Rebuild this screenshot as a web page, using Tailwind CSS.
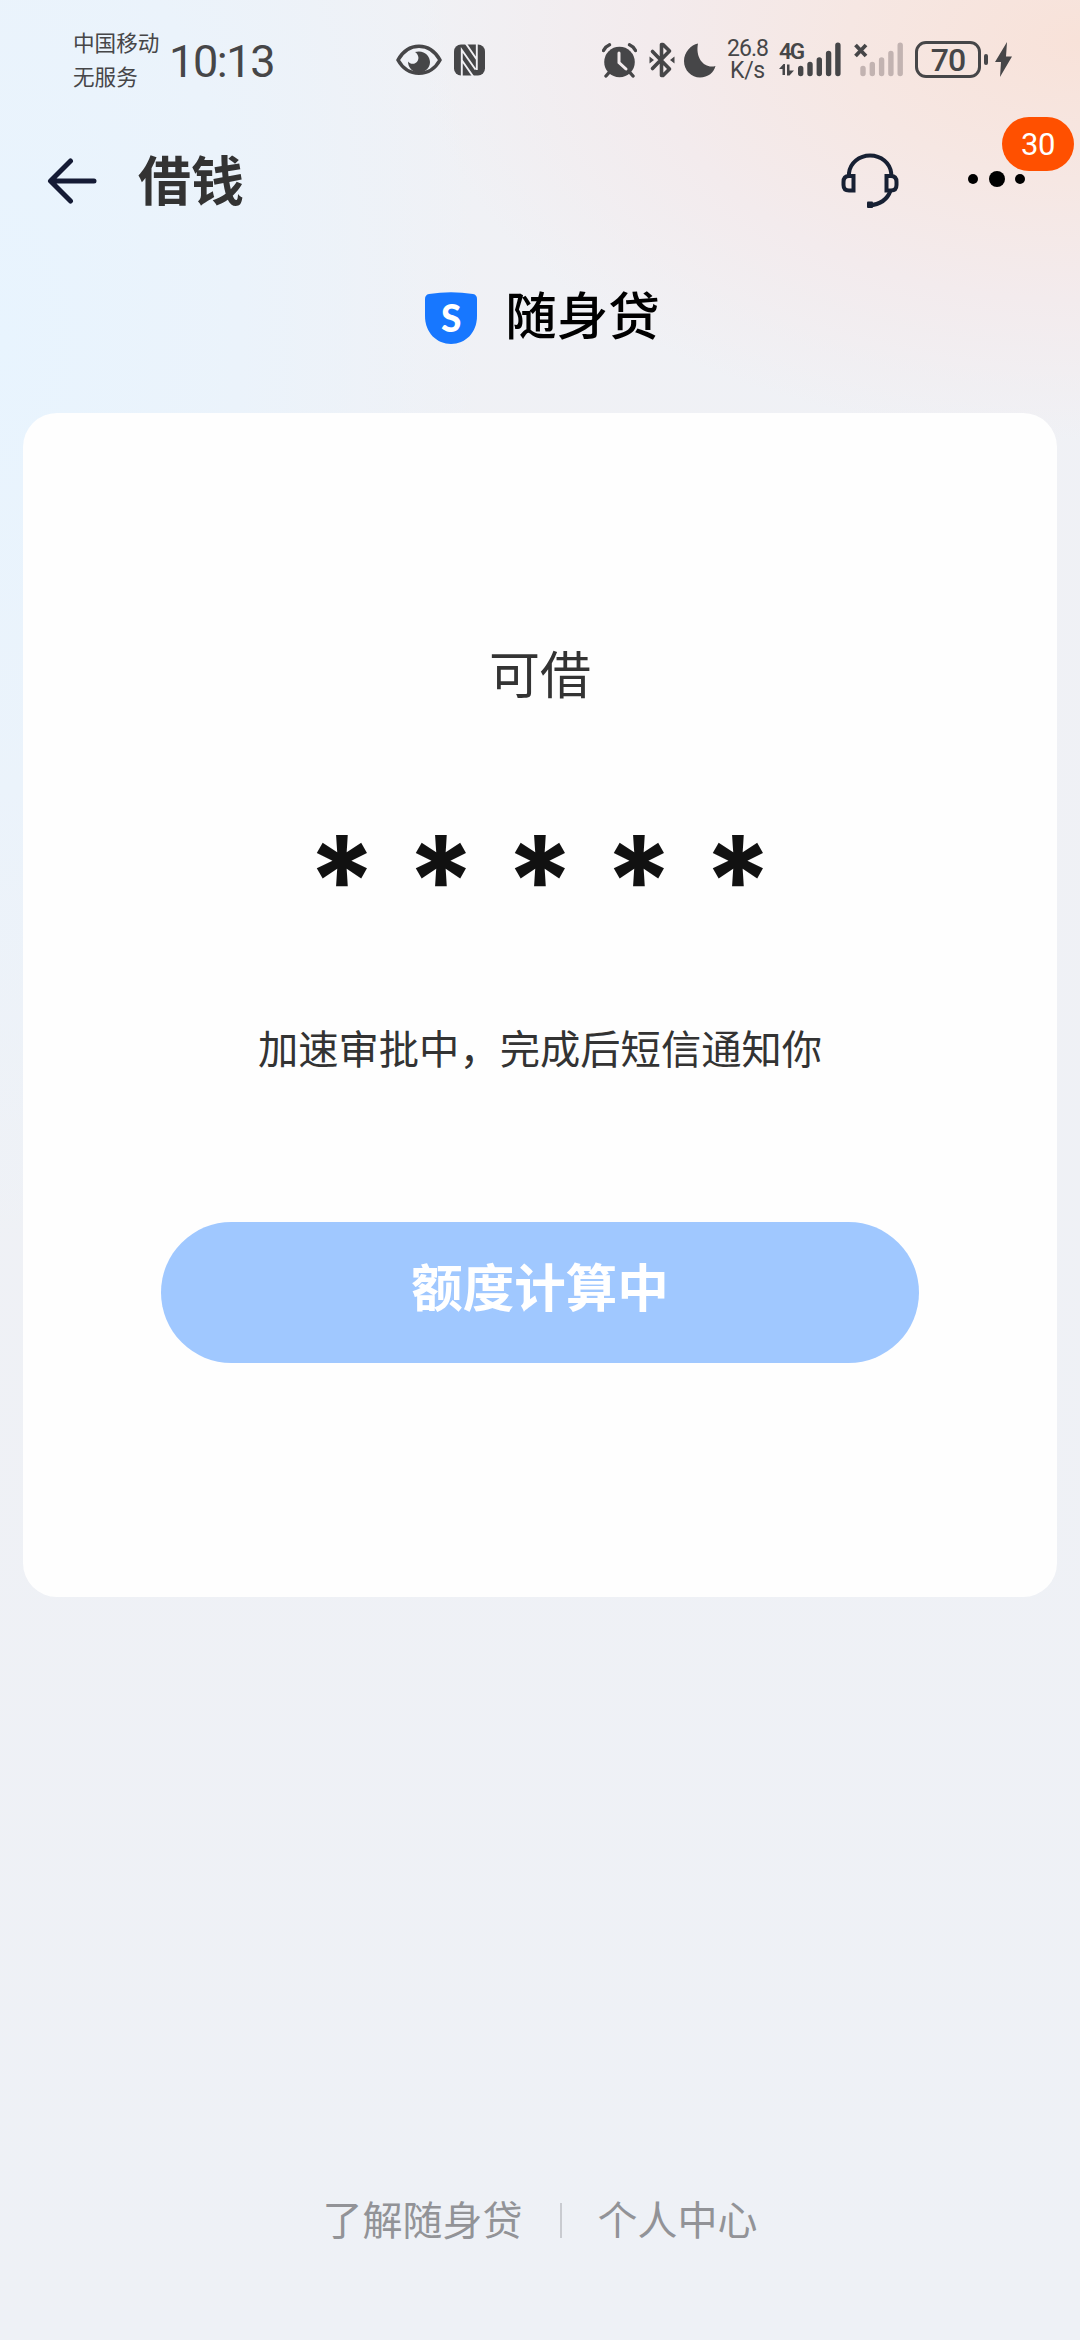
<!DOCTYPE html>
<html lang="zh-CN">
<head>
<meta charset="utf-8">
<meta name="viewport" content="width=device-width">
<title>借钱</title>
<script src="https://cdn.jsdelivr.net/npm/@tailwindcss/browser@4"></script>
</head>
<body class="bg-[#eef1f7] font-['Noto_Sans_CJK_SC',sans-serif]">
<div class="flex h-[2340px] w-[1080px] flex-col overflow-hidden bg-[radial-gradient(ellipse_660px_400px_at_1080px_40px,#f8e2d9_0%,#f6e7e3_35%,#f3ebed_65%,transparent_100%),radial-gradient(ellipse_480px_900px_at_0px_340px,#e8f4fe_0%,#ebf3fb_50%,transparent_100%),linear-gradient(#f0f1f5,#eef1f6)]">

  <!-- status bar -->
  <div class="flex h-[120px] items-start text-[#464648]">
    <div class="ml-[73px] mt-[25px] w-[96px] whitespace-nowrap text-[21.6px] leading-[34px]"><div>中国移动</div><div>无服务</div></div>
    <div class="mt-[37px] w-[227px] font-[Roboto] text-[45px] leading-[50px] tracking-[-1.4px]">10:13</div>
    <svg class="mt-[44px] h-8 w-[46px]" viewBox="0 0 46 32"><path d="M2 16C7 7 14 2.2 23 2.2S39 7 44 16C39 25 32 29.300 23 29.300S7 25 2 16Z" fill="none" stroke="currentColor" stroke-width="3.600" stroke-linejoin="round"/><path d="M19 8C28 5.500 34 12 34 18C34 24 29 28.500 23 28.500C17 28.500 12 24 12 17.500C14 20 17 20.500 19.500 19C24 16.500 23 10.500 19 8Z" fill="currentColor"/></svg>
    <svg class="ml-[12px] mt-[44px] h-8 w-[31px]" viewBox="0 0 31 32"><rect x="0" y="0.500" width="31" height="31" rx="7" fill="currentColor"/><path d="M7.800 32V6L21.500 25.500M11.500 -1L22.800 15.500M22.800 0V26M8 16.500L19.500 33" fill="none" stroke="#f1f0f4" stroke-width="1.900"/></svg>
    <svg class="ml-[117px] mt-[43px] h-[35px] w-[35px]" viewBox="0 0 35 35"><circle cx="17.500" cy="19" r="15.300" fill="currentColor"/><path d="M1.500 7.500Q3.500 3.500 7.500 1.800M33.500 7.500Q31.500 3.500 27.500 1.800M7.500 29L4 33M27.500 29L31 33" stroke="currentColor" stroke-width="3.400" stroke-linecap="round" fill="none"/><path d="M17 10V19.500L24 26" stroke="#f2ebed" stroke-width="3" stroke-linecap="round" fill="none"/></svg>
    <svg class="ml-[12px] mt-[42px] h-9 w-[26px]" viewBox="0 0 26 36"><path d="M3.500 9.500L20.500 27L14 33.500H12.500V2.500H14L20.500 9L3.500 26.500" fill="none" stroke="currentColor" stroke-width="3.600" stroke-linejoin="round" stroke-linecap="round"/><path d="M0.500 14.500L5 18L0.500 21.500ZM25.500 14.500L21 18L25.500 21.500Z" fill="currentColor"/></svg>
    <svg class="ml-[9px] mt-[43px] h-[35px] w-8" viewBox="0 0 32 35"><path d="M14 0.500C7 2 0 9 0 18C0 27.500 7.500 34.500 16 34.500C24 34.500 30 29.500 31.500 23C21 26 11 16 14 0.500Z" fill="currentColor"/></svg>
    <div class="ml-[11px] mt-[38px] w-[41px] whitespace-nowrap text-center font-[Roboto] text-[23px] leading-[22px] tracking-[-1px]"><div>26.8</div><div class="tracking-[-0.3px]">K/s</div></div>
    <div class="ml-[11px] mt-[42px] flex h-9 w-[19px] flex-col">
      <div class="whitespace-nowrap font-[Roboto] text-[22.500px] font-semibold leading-[19px] tracking-[-2px]">4G</div>
      <svg class="mt-[3px] h-3 w-[15px] shrink-0" viewBox="0 0 15 12"><path d="M0 5L4.500 0H6V11H3.500V5ZM8 0.500H10.500V6.500H15L10.500 11.500H8Z" fill="currentColor"/></svg>
    </div>
    <svg class="mt-[42px] h-[35px] w-[43px]" viewBox="0 0 43 35"><path d="M2.700 26.500V31.500M12 22.500V31.500M21.300 18V31.500M30.600 11.500V31.500M39.900 3.200V31.500" stroke="currentColor" stroke-width="5.400" stroke-linecap="round"/></svg>
    <svg class="ml-[13px] mt-[42px] h-[35px] w-[50px]" viewBox="0 0 50 35"><path d="M1.500 3L12 14M12 3L1.500 14" stroke="currentColor" stroke-width="3.800"/><path d="M9 26.500V31.500M18.300 22.500V31.500M27.600 18V31.500M36.900 11.500V31.500M46.200 3.200V31.500" stroke="#c2b3b1" stroke-width="5.400" stroke-linecap="round"/></svg>
    <div class="ml-[11px] mt-[41px] flex h-[37px] w-[66px] items-center justify-center rounded-[11px] border-[3px] border-current font-[Roboto] text-[32px] font-medium leading-none tracking-[-1px]">70</div>
    <div class="ml-[3px] mt-[54px] h-[11px] w-[4px] rounded-full bg-current"></div>
    <svg class="ml-[7px] mt-[42px] h-[35px] w-[17px]" viewBox="0 0 17 35"><path d="M12 0L0 20H6L5 35L17 14.500H11Z" fill="currentColor"/></svg>
  </div>

  <!-- title bar -->
  <div class="flex h-[120px] items-center">
    <svg class="ml-[47px] mt-[1px] h-[46px] w-[51px]" viewBox="0 0 51 46"><path d="M23.500 3L3.500 23L23.500 43M4 23H47" fill="none" stroke="#151b35" stroke-width="5" stroke-linecap="round" stroke-linejoin="round"/></svg>
    <h1 class="-mt-[4px] ml-[40px] text-[53px] font-bold leading-none text-[#333]">借钱</h1>
    <svg class="ml-auto h-[58px] w-[58px]" viewBox="0 0 58 58"><g fill="none" stroke="#172033" stroke-width="4"><path d="M8 25V22A21.200 19.500 0 0 1 50.200 22V25"/><path d="M12.500 25H8Q2.500 25 2.500 31V34Q2.500 39.500 8 39.500H12.500ZM45.500 25H50Q55.500 25 55.500 31V34Q55.500 39.500 50 39.500H45.500Z"/><path d="M49.500 39.500Q45 53 28 54.500"/></g><rect x="26" y="50.500" width="6" height="6.500" rx="1" fill="#172033"/></svg>
    <div class="relative -mt-[2px] ml-[69px] mr-[55px] flex w-[57px] items-center justify-between">
      <span class="size-[10px] rounded-full bg-black"></span><span class="size-4 rounded-full bg-black"></span><span class="size-[10px] rounded-full bg-black"></span>
      <span class="absolute -top-[54px] left-[34px] flex h-[54px] w-[72px] items-center justify-center rounded-full bg-[#ff5000] font-[Roboto] text-[31px] leading-none tracking-[-0.5px] text-white">30</span>
    </div>
  </div>

  <!-- brand -->
  <div class="flex h-[173px] items-start justify-center pt-[47px] pl-[5px]">
    <div class="mt-[5px] grid h-[52px] w-[52px] place-items-center">
      <svg class="col-start-1 row-start-1 h-[52px] w-[52px]" viewBox="0 0 52 52"><path d="M4 2Q26-1.500 48 2Q52 2.800 52 7V24C52 41 40 52 26 52S0 41 0 24V7Q0 2.800 4 2Z" fill="#1777ff"/></svg>
      <span class="col-start-1 row-start-1 -mt-[2px] font-[Lato] text-[37px] font-black leading-none text-white">S</span>
    </div>
    <div class="ml-[28px] text-[51.500px] font-medium leading-[52px] text-black">随身贷</div>
  </div>

  <!-- credit card panel -->
  <main class="mx-[23px] flex h-[1184px] flex-col items-center rounded-[34px] bg-[#fefefe]">
    <div class="mt-[229px] text-[51px] leading-[60px] text-[#333]">可借</div>
    <div class="mt-[134px] flex h-[90px] w-[495px] justify-around font-[Inter] text-[125px] font-bold leading-[90px] text-[#111]"><span>*</span><span>*</span><span>*</span><span>*</span><span>*</span></div>
    <p class="mt-[91px] whitespace-nowrap text-[40.300px] leading-[60px] text-[#333]">加速审批中，完成后短信通知你</p>
    <button class="mt-[145px] flex h-[141px] w-[758px] items-center justify-center rounded-full bg-[#a0c8ff] pb-[15px] text-[51.500px] font-bold leading-none text-white">额度计算中</button>
  </main>

  <!-- footer links -->
  <footer class="mt-auto mb-[92px] flex items-center justify-center text-[40px] leading-[60px] text-[#929397]">
    <a>了解随身贷</a><span class="ml-[37px] mr-[36px] mt-[4px] h-[35px] w-[2px] bg-[#c9cbd0]"></span><a>个人中心</a>
  </footer>
</div>
</body>
</html>
